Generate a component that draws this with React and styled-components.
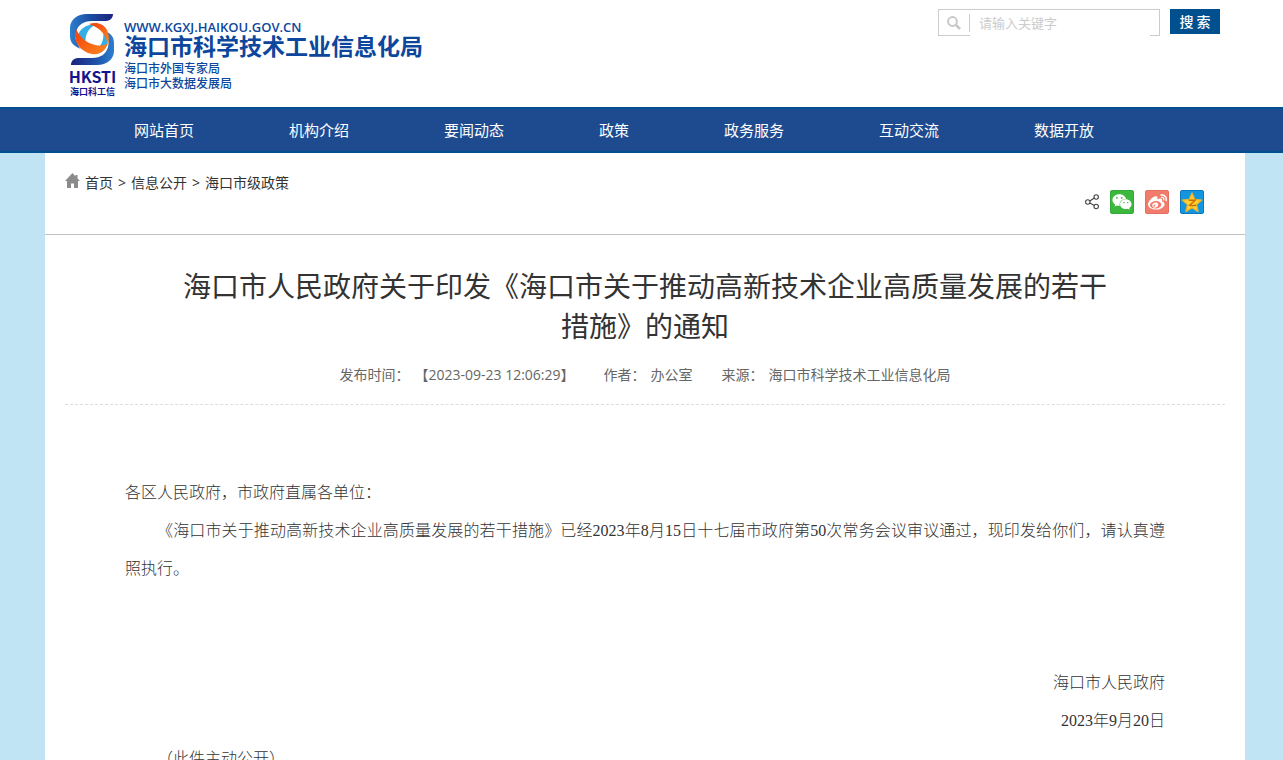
import React from "react";
import styled, { createGlobalStyle } from "styled-components";
import { FaWeixin, FaWeibo } from "react-icons/fa";

const Global = createGlobalStyle`
  * { box-sizing: border-box; }
  body {
    margin: 0;
    background: #c0e4f4;
    font-family: "Open Sans", "Noto Sans CJK SC", sans-serif;
    color: #333;
  }
  a { color: inherit; text-decoration: none; }
`;

const Band = styled.div`
  padding: 0 38px 0 45px;
  background: ${(p) => p.$bg || "transparent"};
`;

const Wrap = styled.div`
  max-width: 1200px;
  margin: 0 auto;
`;

const Header = styled(Wrap)`
  height: 107px;
  padding: 9px 25px 0;
  display: flex;
  justify-content: space-between;
  align-items: flex-start;
`;

const Brand = styled.a`
  display: flex;
  gap: 9px;
  padding-top: 4px;
  color: #0c479d;
`;

const Emblem = styled.div`
  width: 45px;
  display: flex;
  flex-direction: column;
  align-items: center;
  color: #14148c;
  font-weight: 700;
  white-space: nowrap;
  svg { display: block; }
`;

const EmblemCode = styled.span`
  font: 700 16px/22px "Noto Sans CJK SC", sans-serif;
`;

const EmblemName = styled.span`
  font-size: 9px;
  line-height: 10px;
`;

const BrandText = styled.div`
  display: flex;
  flex-direction: column;
  padding-top: 6px;
  white-space: nowrap;
`;

const BrandUrl = styled.span`
  font-size: 13px;
  font-weight: 600;
  line-height: 16px;
`;

const BrandName = styled.strong`
  font-size: 23px;
  font-weight: 700;
  line-height: 22px;
  padding-bottom: 4px;
`;

const BrandSub = styled.span`
  font-size: 12px;
  font-weight: 500;
  line-height: 15px;
`;

const Search = styled.form`
  display: flex;
  gap: 10px;
  align-items: flex-start;
`;

const SearchBox = styled.label`
  width: 222px;
  height: 27px;
  border: 1px solid #ccc;
  display: flex;
  align-items: flex-start;
  padding-right: 9px;
`;

const SearchIcon = styled.span`
  width: 31px;
  height: 18px;
  margin-top: 4px;
  border-right: 1px solid #ccc;
  display: flex;
  align-items: center;
  justify-content: center;
`;

const SearchInput = styled.input`
  flex: 1;
  min-width: 0;
  height: 26px;
  border: 0;
  outline: 0;
  padding: 0 9px 2px;
  background: #fff;
  font: 13px/20px "Noto Sans CJK SC", sans-serif;
  &::placeholder { color: #ccc; opacity: 1; }
`;

const SearchButton = styled.button`
  width: 50px;
  height: 25px;
  border: 0;
  padding: 0;
  background: #00508f;
  color: #fff;
  font: 500 14px/25px "Noto Sans CJK SC", sans-serif;
`;

const NavBar = styled.nav`
  background: #1e4b8f;
  border-top: 2px solid #004f8e;
  border-bottom: 2px solid #004f8e;
  padding: 0 38px 0 45px;
`;

const NavList = styled(Wrap)`
  display: flex;
  gap: 95px;
  padding-left: 89px;
`;

const NavLink = styled.a`
  color: #fff;
  font-size: 15px;
  line-height: 42px;
  white-space: nowrap;
`;

const Page = styled(Wrap)`
  background: #fff;
  padding-bottom: 60px;
`;

const TopRow = styled.div`
  height: 82px;
  border-bottom: 1px solid #c1c1c1;
  padding: 19px 41px 0 20px;
  display: flex;
  justify-content: space-between;
  align-items: flex-start;
`;

const Crumbs = styled.div`
  display: flex;
  align-items: center;
  gap: 5px;
  font-size: 14px;
  line-height: 22px;
`;

const HomeIcon = styled.svg`
  width: 15px;
  height: 16px;
  margin-bottom: 4px;
`;

const Share = styled.div`
  display: flex;
  align-items: center;
  gap: 11px;
  padding-top: 18px;
`;

const ShareLink = styled.a`
  width: 24px;
  height: 24px;
  border-radius: 2px;
  background: ${(p) => p.$bg};
  border: 1px solid ${(p) => p.$edge};
  color: #fff;
  display: flex;
  align-items: center;
  justify-content: center;
`;

const Article = styled.article`
  padding: 0 20px;
`;

const Title = styled.h1`
  margin: 0;
  padding: 31px 105px 0;
  text-align: center;
  font-size: 28px;
  line-height: 40px;
  font-weight: 400;
`;

const Meta = styled.div`
  display: flex;
  justify-content: center;
  gap: 29px;
  padding: 18px 0 19px;
  border-bottom: 1px dashed #ddd;
  color: #666;
  font-size: 14px;
  line-height: 21px;
`;

const MetaItem = styled.span`
  display: flex;
  gap: 5px;
`;

const Body = styled.div`
  padding: 69px 60px 0;
  color: #333;
  font-family: "Liberation Serif", "Noto Sans CJK SC", serif;
  font-size: 16px;
  font-weight: 300;
  line-height: 38px;
`;

const Para = styled.p`
  margin: 0;
  min-height: 38px;
  text-indent: ${(p) => (p.$indent ? "2em" : "0")};
  text-align: ${(p) => (p.$right ? "right" : "justify")};
`;

const NAV = ["网站首页", "机构介绍", "要闻动态", "政策", "政务服务", "互动交流", "数据开放"];

const ARM = "M43 1H17C7 1 0 7 0 15v8c0 7 4 11 14 14C7 32 4 26 6 19 8 12 13 8 22 8h14c4 0 7-3 7-7z";

const Logo = () => (
  <svg width="45" height="52" viewBox="0 0 45 52" aria-hidden="true">
    <defs>
      <linearGradient id="bar" x1="0" x2="1">
        <stop offset="0" stopColor="#2c7fd0" />
        <stop offset=".45" stopColor="#1c4fa5" />
        <stop offset="1" stopColor="#1b237c" />
      </linearGradient>
      <linearGradient id="flame" x1="0" x2="1" y2="1">
        <stop offset="0" stopColor="#f03d0c" />
        <stop offset="1" stopColor="#ff8a1e" />
      </linearGradient>
    </defs>
    <path fill="url(#bar)" d={ARM} />
    <path fill="url(#bar)" transform="rotate(180 22 26.5)" d={ARM} />
    <circle cx="22.5" cy="26" r="15.500" fill="#fff" />
    <path fill="#35aee6" d="M12 35C3 23 10 11 27 11c-9 4-13 11-11 22z" />
    <path fill="#35aee6" d="M33 17c7 6 6 17-1 22-3 2-8 3-11 1 9-4 14-12 12-23z" />
    <path fill="url(#flame)" d="M6 16c4 9 11 14 19 16 5 1 9 1 13-2-3 10-13 14-22 9C7 34 3 26 6 16z" />
    <path fill="url(#flame)" d="M19 11c14-4 23 6 19 22-1-10-7-18-19-22z" />
  </svg>
);

const Qzone = () => (
  <svg width="24" height="23" viewBox="0 0 24 23" aria-hidden="true">
    <path
      d="M12 1.200l3 6.900 7.600.700-5.700 5 1.700 7.400-6.600-3.900-6.600 3.900 1.700-7.400-5.700-5 7.600-.700z"
      fill="#ffd02e"
      stroke="#f0b428"
      strokeWidth="1.400"
      strokeLinejoin="round"
    />
    <path d="M8.500 9h7l-6 5.500c2 .500 4 .500 7 0" fill="none" stroke="#cc6a08" strokeWidth="1.500" />
  </svg>
);

export default function App() {
  return (
    <>
      <Global />
      <Band as="header" $bg="#fff">
        <Header>
          <Brand href="#">
            <Emblem>
              <Logo />
              <EmblemCode>HKSTI</EmblemCode>
              <EmblemName>海口科工信</EmblemName>
            </Emblem>
            <BrandText>
              <BrandUrl>WWW.KGXJ.HAIKOU.GOV.CN</BrandUrl>
              <BrandName>海口市科学技术工业信息化局</BrandName>
              <BrandSub>海口市外国专家局</BrandSub>
              <BrandSub>海口市大数据发展局</BrandSub>
            </BrandText>
          </Brand>
          <Search onSubmit={(e) => e.preventDefault()}>
            <SearchBox>
              <SearchIcon>
                <svg width="14" height="14" viewBox="0 0 14 14" fill="none" stroke="#c8c8c8" aria-hidden="true">
                  <circle cx="5.5" cy="5.5" r="4.4" strokeWidth="2" />
                  <path d="M9 9l4 4" strokeWidth="2.6" />
                </svg>
              </SearchIcon>
              <SearchInput type="text" placeholder="请输入关键字" aria-label="请输入关键字" />
            </SearchBox>
            <SearchButton type="submit">搜 索</SearchButton>
          </Search>
        </Header>
      </Band>
      <NavBar>
        <NavList>
          {NAV.map((t) => (
            <NavLink key={t} href="#">{t}</NavLink>
          ))}
        </NavList>
      </NavBar>
      <Band as="main">
        <Page>
          <TopRow>
            <Crumbs>
              <HomeIcon viewBox="0 0 15 16" fill="#8b8b8b" aria-hidden="true">
                <path d="M7.500 0L0 8h2v7h4v-4.500h3V15h4V8h2l-2.500-2.500V2h-2v1.500z" />
              </HomeIcon>
              <a href="#">首页</a>
              <span>&gt;</span>
              <a href="#">信息公开</a>
              <span>&gt;</span>
              <a href="#">海口市级政策</a>
            </Crumbs>
            <Share>
              <svg width="14" height="16" viewBox="0 0 14 16" fill="none" stroke="#444" strokeWidth="1.1" aria-hidden="true">
                <circle cx="2.800" cy="8" r="2.200" />
                <circle cx="11.200" cy="3" r="2.200" />
                <circle cx="11.200" cy="12.500" r="2.200" />
                <path d="M4.800 7l4.500-3M4.800 9l4.500 2.500" />
              </svg>
              <ShareLink href="#" aria-label="微信" $bg="#3cb83f" $edge="#35a939">
                <FaWeixin size={20} />
              </ShareLink>
              <ShareLink href="#" aria-label="微博" $bg="#f27c6c" $edge="#e57062">
                <FaWeibo size={19} />
              </ShareLink>
              <ShareLink href="#" aria-label="QQ空间" $bg="#1296e0" $edge="#0b78c0">
                <Qzone />
              </ShareLink>
            </Share>
          </TopRow>
          <Article>
            <Title>海口市人民政府关于印发《海口市关于推动高新技术企业高质量发展的若干措施》的通知</Title>
            <Meta>
              <MetaItem><span>发布时间：</span><span>【2023-09-23 12:06:29】</span></MetaItem>
              <MetaItem><span>作者：</span><span>办公室</span></MetaItem>
              <MetaItem><span>来源：</span><span>海口市科学技术工业信息化局</span></MetaItem>
            </Meta>
            <Body>
              <Para>各区人民政府，市政府直属各单位：</Para>
              <Para $indent>
                《海口市关于推动高新技术企业高质量发展的若干措施》已经2023年8月15日十七届市政府第50次常务会议审议通过，现印发给你们，请认真遵照执行。
              </Para>
              <Para />
              <Para />
              <Para $right>海口市人民政府</Para>
              <Para $right>2023年9月20日</Para>
              <Para $indent>（此件主动公开）</Para>
            </Body>
          </Article>
        </Page>
      </Band>
    </>
  );
}
